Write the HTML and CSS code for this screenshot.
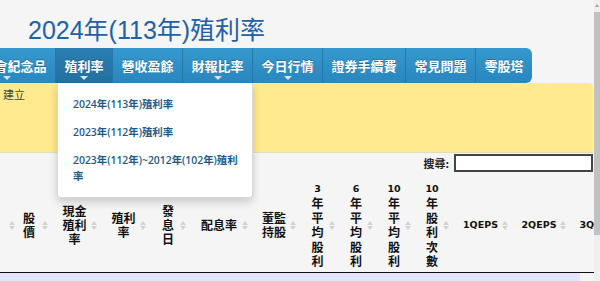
FILE: index.html
```html
<!DOCTYPE html>
<html lang="zh-Hant">
<head>
  <meta charset="UTF-8" />
  <meta name="viewport" content="width=device-width, initial-scale=1.0"/>
  <title>2024年(113年)殖利率</title>
  <link rel="stylesheet" href="styles.css">
</head>
<body>

<div class="page">
  <h1 class="title">2024年(113年)殖利率</h1>

  <nav class="menu">
    <ul class="menu-list">
      <li class="menu-item clipped"><a class="menu-link" href="#">股東會紀念品<span class="caret"></span></a></li>
      <li class="menu-item active">
        <a class="menu-link" href="#">殖利率<span class="caret"></span></a>
        <ul class="dropdown">
          <li><a class="dropdown-link" href="#">2024年(113年)殖利率</a></li>
          <li><a class="dropdown-link" href="#">2023年(112年)殖利率</a></li>
          <li><a class="dropdown-link" href="#">2023年(112年)~2012年(102年)殖利率</a></li>
        </ul>
      </li>
      <li class="menu-item"><a class="menu-link" href="#">營收盈餘</a></li>
      <li class="menu-item"><a class="menu-link" href="#">財報比率<span class="caret"></span></a></li>
      <li class="menu-item"><a class="menu-link" href="#">今日行情<span class="caret"></span></a></li>
      <li class="menu-item"><a class="menu-link" href="#">證券手續費</a></li>
      <li class="menu-item"><a class="menu-link" href="#">常見問題</a></li>
      <li class="menu-item"><a class="menu-link" href="#">零股塔</a></li>
    </ul>
  </nav>

  <div class="notice">建立</div>

  <div class="search">
    <label for="q">搜尋:</label>
    <input id="q" type="text">
  </div>

  <div class="thead">
    <div class="th"><span class="th-label"></span><span class="sort"></span></div>
    <div class="th"><span class="th-label">股價</span><span class="sort"></span></div>
    <div class="th"><span class="th-label">現金殖利率</span><span class="sort"></span></div>
    <div class="th"><span class="th-label">殖利率</span><span class="sort"></span></div>
    <div class="th"><span class="th-label">發息日</span><span class="sort"></span></div>
    <div class="th"><span class="th-label">配息率</span><span class="sort"></span></div>
    <div class="th"><span class="th-label">董監持股</span><span class="sort"></span></div>
    <div class="th"><span class="th-label"><span class="num lead">3</span>年平均股利</span><span class="sort"></span></div>
    <div class="th"><span class="th-label"><span class="num lead">6</span>年平均股利</span><span class="sort"></span></div>
    <div class="th"><span class="th-label"><span class="num lead">10</span>年平均股利</span><span class="sort"></span></div>
    <div class="th"><span class="th-label"><span class="num lead">10</span>年股利次數</span><span class="sort"></span></div>
    <div class="th"><span class="th-label num">1QEPS</span><span class="sort"></span></div>
    <div class="th"><span class="th-label num">2QEPS</span><span class="sort"></span></div>
    <div class="th"><span class="th-label num">3QEPS</span><span class="sort"></span></div>
  </div>
  <div class="row-odd"></div>
</div>

<div class="scrollbar">
  <span class="scroll-up"></span>
  <span class="scroll-thumb"></span>
</div>

</body>
</html>
```

FILE: styles.css
```css
html, body {
  margin: 0;
  height: 100%;
  overflow: hidden;
}
body {
  display: flex;
  background-color: #f5f5f5;
  font-family: "Noto Sans CJK TC", sans-serif;
}
.page {
  flex: 1;
  min-width: 0;
  overflow: hidden;
}
.title {
  margin: 0;
  padding: 15px 0 3px 28px;
  font: 400 25px/30px "Liberation Sans", "Noto Sans CJK TC", sans-serif;
  color: #2161a8;
  white-space: nowrap;
}

/* menu */
.menu-list {
  list-style: none;
  margin: 0;
  padding: 0;
  display: flex;
  width: fit-content;
  height: 35px;
  background: linear-gradient(#3499cf, #2a86bf);
  border-radius: 0 6px 6px 0;
}
.menu-item {
  position: relative;
  border-left: 1px solid #2576a9;
}
.menu-item.clipped {
  border-left: 0;
  width: 55px;
  overflow: hidden;
  display: flex;
  justify-content: flex-end;
}
.menu-link {
  display: flex;
  flex-direction: column;
  align-items: center;
  height: 35px;
  box-sizing: border-box;
  padding: 9px 8.5px 0;
  color: white;
  font-size: 13px;
  font-weight: 700;
  line-height: 18px;
  text-decoration: none;
  white-space: nowrap;
  text-shadow: 0 -1px 0 rgba(0,0,0,0.25);
}
.menu-item.active .menu-link {
  background: linear-gradient(#2a7fb4, #22709f);
}
.caret {
  width: 0;
  height: 0;
  margin-top: 1px;
  border-left: 4px solid transparent;
  border-right: 4px solid transparent;
  border-top: 4px solid #d5e6f2;
}
.dropdown {
  position: absolute;
  top: 100%;
  left: 1px;
  z-index: 10;
  width: 196px;
  box-sizing: border-box;
  margin: 0;
  padding: 7px 0;
  list-style: none;
  background: white;
  border: 1px solid rgba(0,0,0,0.15);
  border-top: 0;
  border-radius: 0 0 4px 4px;
  box-shadow: 0 4px 8px rgba(0,0,0,0.18);
}
.dropdown-link {
  display: block;
  padding: 6px 12px 6px 15px;
  font: 600 10.4px/16px "Open Sans", "Noto Sans CJK TC", sans-serif;
  color: #1b5b8c;
  text-decoration: none;
}

/* notice + search */
.notice {
  height: 70px;
  box-sizing: border-box;
  margin-right: 1px;
  padding: 4px 3px;
  background-color: #ffea8f;
  border-bottom: 1px solid #e4dcb4;
  border-radius: 0 4px 0 0;
  font-size: 11px;
  line-height: 14px;
  color: #444;
}
.search {
  display: flex;
  justify-content: flex-end;
  align-items: center;
  gap: 5px;
  margin: 1px 1px 0 0;
  font-size: 11px;
  font-weight: 700;
  color: #222;
}
.search input {
  width: 139px;
  height: 18px;
  box-sizing: border-box;
  padding: 0 3px;
  border: 2px solid #444;
  background: white;
}

/* table header */
.thead {
  display: grid;
  grid-template-columns: 10px 42px 49px 49px 40px 62px 48px 39px 38px 38px 38px 59px 58px 58px;
  align-items: center;
  width: max-content;
  margin-top: 5px;
  padding: 5px 0 4px;
  border-bottom: 1px solid #111;
}
.th {
  display: flex;
  align-items: center;
  padding-left: 8px;
  font-size: 12px;
  font-weight: 700;
  line-height: 14.4px;
  color: #111;
}
.th-label {
  flex: 1;
  min-width: 0;
  text-align: center;
}
.num {
  font-family: "DejaVu Sans", sans-serif;
  font-size: 9.5px;
}
.lead {
  display: block;
}
.sort {
  display: flex;
  flex-direction: column;
  align-items: center;
  gap: 1px;
  width: 7px;
  margin: 0 4px 0 1px;
}
.sort::before,
.sort::after {
  content: "";
  border-left: 3px solid transparent;
  border-right: 3px solid transparent;
}
.sort::before {
  border-bottom: 4px solid #d2d2d2;
}
.sort::after {
  border-top: 4px solid #d2d2d2;
}
.row-odd {
  height: 20px;
  margin-right: 14px;
  background-color: #e4e4fa;
}

/* scrollbar */
.scrollbar {
  width: 6px;
  display: flex;
  flex-direction: column;
  align-items: center;
  background-color: #efefef;
}
.scroll-up {
  width: 0;
  height: 0;
  margin: 4px 0 5px;
  border-left: 2px solid transparent;
  border-right: 2px solid transparent;
  border-bottom: 3px solid #a3a3a3;
}
.scroll-thumb {
  width: 100%;
  height: 223px;
  background-color: #c1c1c1;
}
```
